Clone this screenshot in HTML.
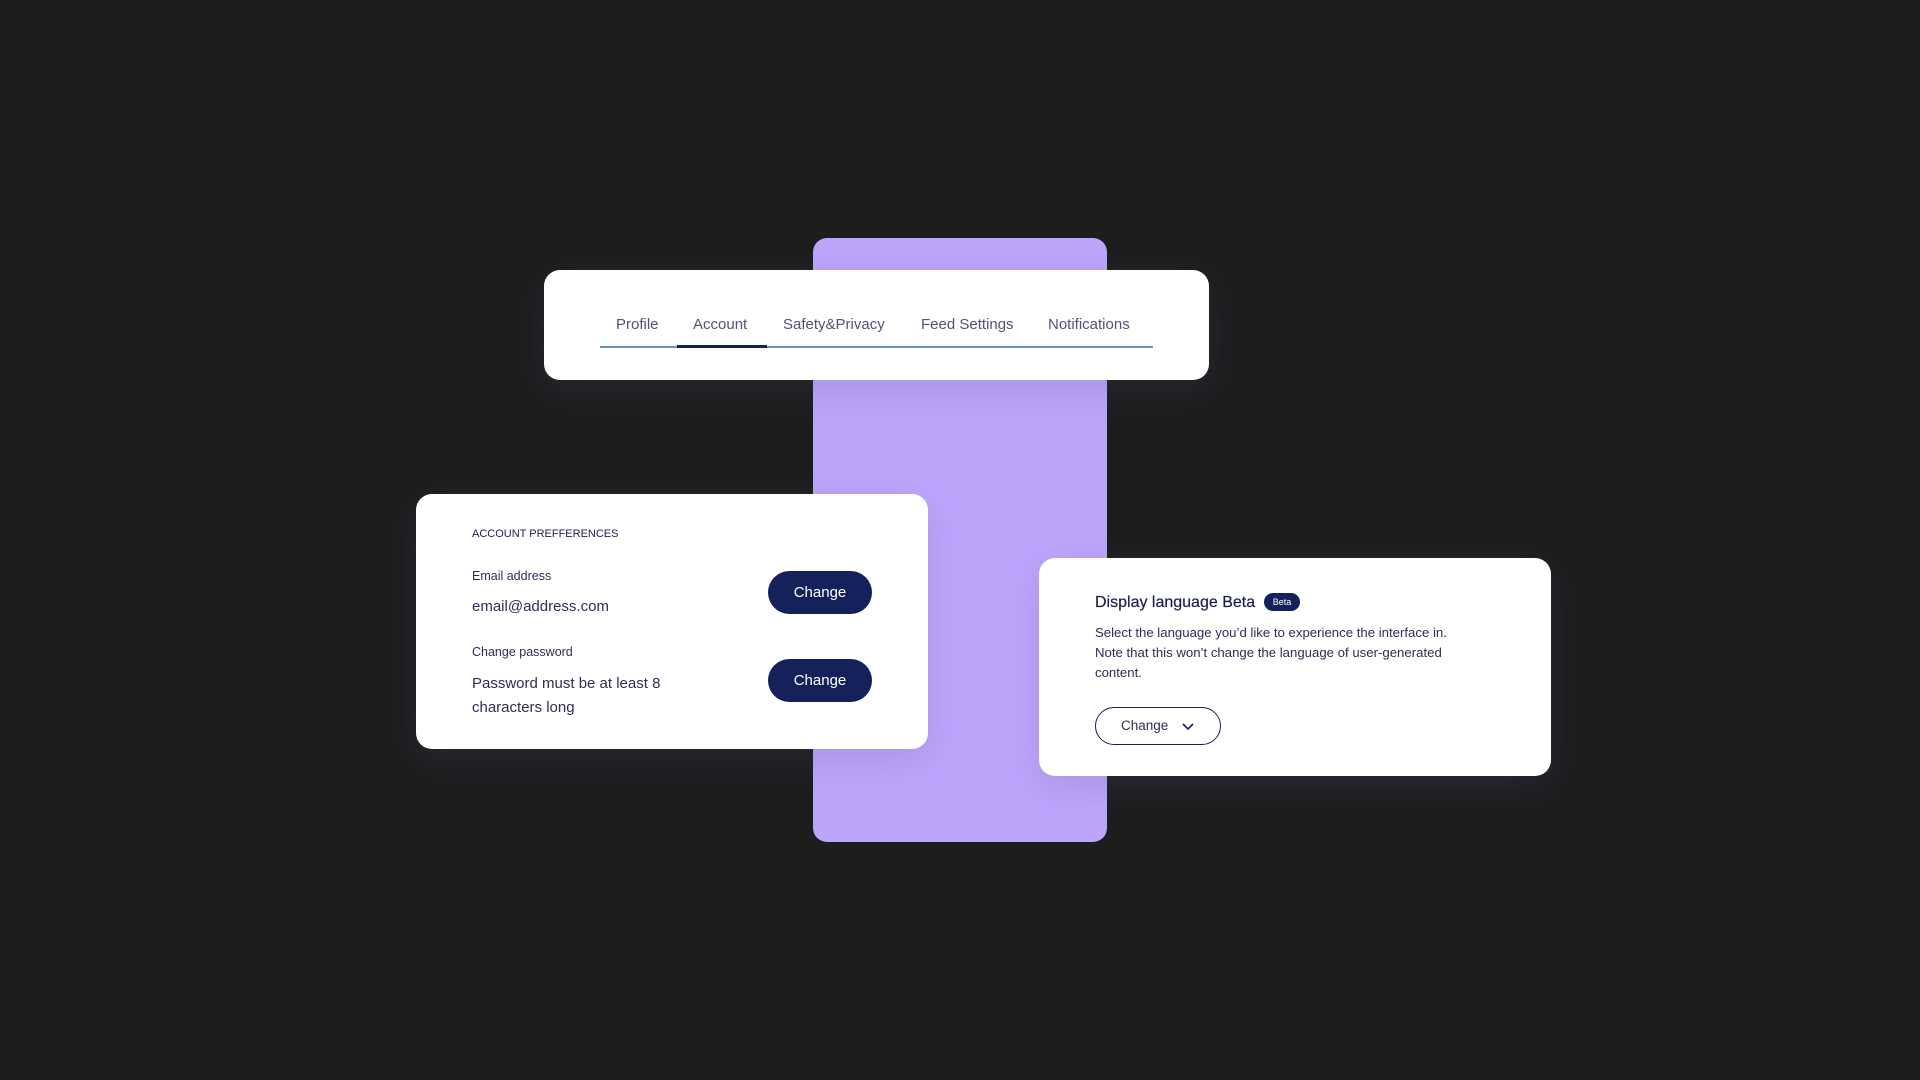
<!DOCTYPE html>
<html><head><style>
body{margin:0;width:1920px;height:1080px;background:#1d1d1e;position:relative;overflow:hidden;font-family:"Liberation Sans",sans-serif;color:#1b1f4e}
.abs{position:absolute}
.purple{left:813px;top:238px;width:294px;height:604px;background:#bca6fc;border-radius:14px}
.card{background:#fff;border-radius:16px;box-shadow:0 10px 36px rgba(90,80,130,.2)}
.tab{top:316px;font-size:15px;color:#5b4d75}
.btn{background:#14215a;color:#fff;border-radius:22px;font-size:15px;text-align:center;line-height:43px;width:104px;height:43px}
</style></head><body>
<div class="abs purple"></div>
<div class="abs card" style="left:544px;top:270px;width:665px;height:110px"></div>
<div class="abs" style="left:600px;top:346px;width:553px;height:2px;background:#6a8fc8"></div>
<div class="abs" style="left:677px;top:345px;width:90px;height:3px;background:#14215a"></div>
<div class="abs tab" style="left:616px">Profile</div>
<div class="abs tab" style="left:693px">Account</div>
<div class="abs tab" style="left:783px">Safety&amp;Privacy</div>
<div class="abs tab" style="left:921px">Feed Settings</div>
<div class="abs tab" style="left:1048px">Notifications</div>

<div class="abs card" style="left:416px;top:494px;width:512px;height:255px"></div>
<div class="abs" style="left:472px;top:528px;font-size:11px">ACCOUNT PREFFERENCES</div>
<div class="abs" style="left:472px;top:569px;font-size:12.5px;color:#2c2f55">Email address</div>
<div class="abs" style="left:472px;top:598px;font-size:15px;color:#2c2f55">email@address.com</div>
<div class="abs btn" style="left:768px;top:571px">Change</div>
<div class="abs" style="left:472px;top:645px;font-size:12.5px;color:#2c2f55">Change password</div>
<div class="abs" style="left:472px;top:672px;font-size:15px;line-height:24px;color:#2c2f55">Password must be at least 8<br>characters long</div>
<div class="abs btn" style="left:768px;top:659px">Change</div>

<div class="abs card" style="left:1039px;top:558px;width:512px;height:218px"></div>
<div class="abs" style="left:1095px;top:594px;font-size:16px;color:#1b1f4e;-webkit-text-stroke:0.2px #1b1f4e">Display language Beta</div>
<div class="abs" style="left:1264px;top:593px;width:36px;height:18px;border-radius:9px;background:#14215a;color:#fff;font-size:9px;line-height:18px;text-align:center">Beta</div>
<div class="abs" style="left:1095px;top:623px;font-size:13.2px;line-height:20px;color:#2c2f55">Select the language you’d like to experience the interface in.<br>Note that this won’t change the language of user-generated<br>content.</div>
<div class="abs" style="left:1095px;top:707px;width:124px;height:36px;border:1.5px solid #14215a;border-radius:20px;font-size:13.5px;line-height:36px;color:#2c2f55"><span style="margin-left:25px">Change</span>
<svg class="abs" style="left:85px;top:14px" width="14" height="9" viewBox="0 0 14 9"><path d="M2 2l5 5 5-5" fill="none" stroke="#14215a" stroke-width="1.6"/></svg></div>
</body></html>
